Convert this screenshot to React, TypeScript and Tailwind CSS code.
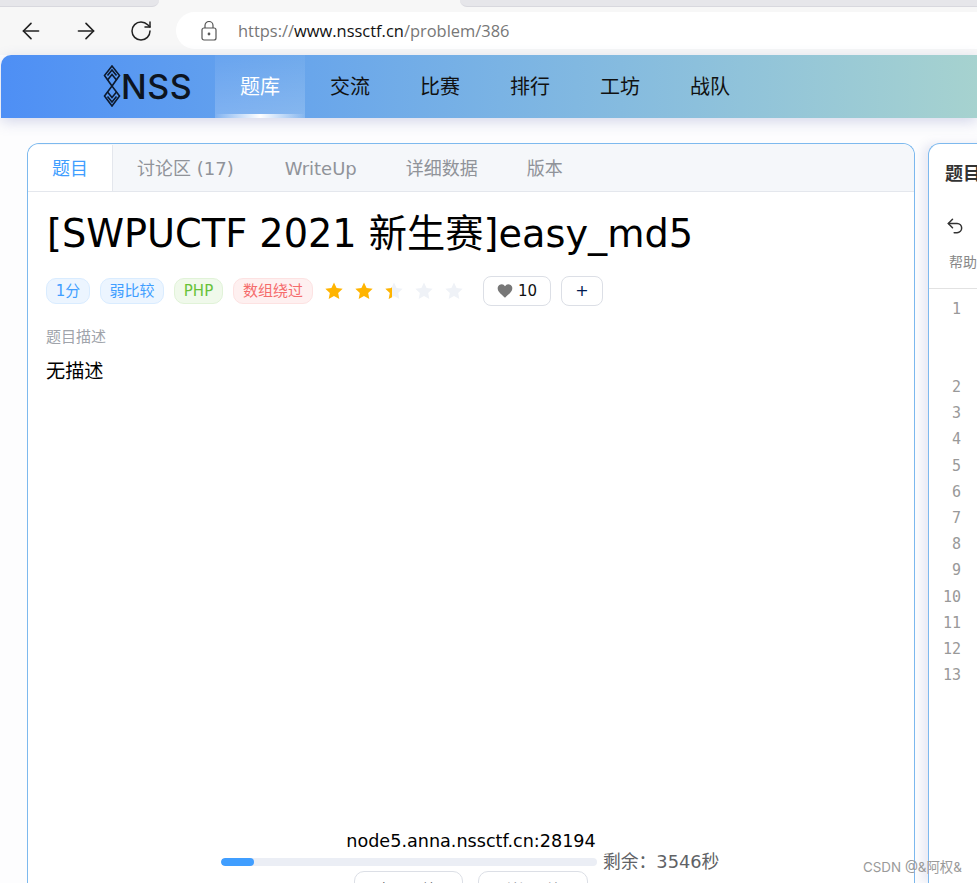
import { ArrowLeft, ArrowRight, RotateCw, Undo2 } from "lucide-react";

const navItems = ["题库", "交流", "比赛", "排行", "工坊", "战队"];
const lineNumbers = [2, 3, 4, 5, 6, 7, 8, 9, 10, 11, 12, 13];

const tags = [
  { label: "1分", cls: "w-[44px] border-[#d9ecff] bg-[#ecf5ff] text-[#409eff]" },
  { label: "弱比较", cls: "w-[64px] border-[#d9ecff] bg-[#ecf5ff] text-[#409eff]" },
  { label: "PHP", cls: "w-[49px] border-[#e1f3d8] bg-[#f0f9eb] text-[#67c23a]" },
  { label: "数组绕过", cls: "w-[80px] border-[#fde2e2] bg-[#fef0f0] text-[#f56c6c]" },
];

function Star({ color }: { color: string }) {
  return (
    <svg viewBox="0 0 24 24" className="h-[20px] w-[20px]" fill={color}>
      <path d="M12 1.800l3.100 6.700 7.300.9-5.400 5 1.400 7.300-6.400-3.600-6.400 3.600 1.400-7.300-5.400-5 7.300-.9z" />
    </svg>
  );
}

function LogoMark() {
  return (
    <svg viewBox="0 0 18 42" className="mb-px h-[42px] w-[18px]" fill="none" stroke="#0d1a2e" strokeWidth="1.600">
      <path d="M9 1L1.500 10.500 9 21l7.500-10.500z" />
      <path d="M4.500 10.500L9 5l4.500 5.500" />
      <path d="M4.500 15L9 9.500l4.500 5.500" />
      <path d="M9 21L1.500 31 9 41l7.500-10L9 21z" />
      <path d="M4.500 27L9 32.500 13.500 27" />
      <path d="M4.500 31.500L9 37l4.500-5.500" />
    </svg>
  );
}

export default function App() {
  return (
    <div className="relative flex h-[883px] w-[977px] flex-col overflow-hidden bg-[#fdfdfe] font-['DejaVu_Sans','Noto_Sans_CJK_SC',sans-serif]">
      {/* browser chrome */}
      <div className="flex h-[7px] justify-between bg-[#f7f7f7]">
        <div className="h-full w-[159px] rounded-br-lg border-b border-[#d8d8de] bg-[#e6e6ea]" />
        <div className="h-full w-[517px] rounded-bl-lg border-b border-[#d8d8de] bg-[#e6e6ea]" />
      </div>
      <div className="flex h-[48px] items-center bg-[#f7f7f7] pb-px pl-[18px]">
        <ArrowLeft className="h-[26px] w-[26px] text-[#222]" strokeWidth={1.5} />
        <ArrowRight className="ml-[29px] h-[26px] w-[26px] text-[#222]" strokeWidth={1.5} />
        <RotateCw className="ml-[30px] h-[24px] w-[24px] text-[#222]" strokeWidth={1.5} />
        <div className="ml-[23px] flex h-[37px] flex-1 items-center rounded-l-full bg-white pl-[25px]">
          <svg viewBox="0 0 16 20" className="h-[20px] w-[16px]" fill="none" stroke="#555" strokeWidth="1.200">
            <rect x="1" y="7" width="14" height="12" rx="2" />
            <path d="M4 7V4.500a4 4 0 018 0V7" />
            <circle cx="8" cy="13" r="0.8" fill="#555" />
          </svg>
          <span className="ml-[21px] pt-px font-['Open_Sans',sans-serif] text-[16.45px] text-[#777]">
            https://<span className="text-[#111]">www.nssctf.cn</span>/problem/386
          </span>
        </div>
      </div>

      {/* nav */}
      <div className="ml-px flex h-[63px] shrink-0 items-stretch rounded-tl-[10px] bg-gradient-to-r from-[#4e8ff5] to-[#a6d2cf] shadow-[0_4px_14px_rgba(120,130,190,0.3)]">
        <div className="flex w-[214px] items-center pl-[102px]">
          <LogoMark />
          <span className="font-['Inter',sans-serif] text-[34px] font-medium tracking-[0.5px] text-[#0d1420]">NSS</span>
        </div>
        {navItems.map((item, i) => (
          <div
            key={item}
            className={`relative flex w-[90px] items-center justify-center text-[20px] ${
              i === 0 ? "bg-gradient-to-b from-white/5 to-white/20 text-white" : "text-[#111]"
            }`}
          >
            {item}
            {i === 0 && (
              <div className="absolute inset-x-0 bottom-0 h-[4px] bg-gradient-to-r from-transparent via-white to-transparent" />
            )}
          </div>
        ))}
      </div>

      <div className="flex min-h-0 flex-1 gap-[13px] pl-[27px] pt-[25px]">
        {/* problem panel */}
        <div className="w-[888px] shrink-0 rounded-t-[12px] border border-b-0 border-[#7db9ee] bg-white">
          <div className="flex h-[48px] overflow-hidden rounded-t-[12px] border-b border-[#e4e7ed] bg-[#f5f7fa] pt-px text-[18px] text-[#909399]">
            <div className="-mb-px flex w-[85px] items-center justify-center border-r border-[#e4e7ed] bg-white text-[#409eff]">题目</div>
            <div className="ml-[24px] flex items-center">讨论区 (17)</div>
            <div className="ml-[51px] flex items-center">WriteUp</div>
            <div className="ml-[49px] flex items-center">详细数据</div>
            <div className="ml-[49px] flex items-center">版本</div>
          </div>

          <div className="pl-[18px]">
            <h1 className="ml-px mt-[15px] whitespace-nowrap text-[38.25px] leading-[54px] text-black">[SWPUCTF 2021 新生赛]easy_md5</h1>

            <div className="mt-[15px] flex h-[30px] items-center">
              <div className="flex gap-[10px]">
                {tags.map((t) => (
                  <div key={t.label} className={`flex h-[26px] items-center justify-center rounded-[10px] border text-[15px] ${t.cls}`}>
                    {t.label}
                  </div>
                ))}
              </div>
              <div className="ml-[11px] flex gap-[10px]">
                <Star color="#ffb400" />
                <Star color="#ffb400" />
                <div className="relative">
                  <Star color="#eff2f7" />
                  <div className="absolute left-0 top-0 h-[20px] w-[8px] overflow-hidden">
                    <Star color="#ffb400" />
                  </div>
                </div>
                <Star color="#eff2f7" />
                <Star color="#eff2f7" />
              </div>
              <div className="ml-[19px] flex h-[30px] w-[68px] items-center justify-center gap-[5px] rounded-[8px] border border-[#dcdfe6] text-[15px] text-[#111]">
                <svg viewBox="0 0 24 24" className="h-[16px] w-[16px]" fill="#777">
                  <path d="M12 22C5 16 1 12.500 1 8a6 6 0 0111-3.300A6 6 0 0123 8c0 4.500-4 8-11 14z" />
                </svg>
                10
              </div>
              <div className="ml-[10px] flex h-[30px] w-[42px] items-center justify-center rounded-[8px] border border-[#dcdfe6] text-[16px] text-[#001a50]">+</div>
            </div>

            <div className="mt-[21px] text-[15px] leading-[20px] text-[#a0a4ab]">题目描述</div>
            <div className="mt-[13px] text-[19.2px] leading-[24px] text-black">无描述</div>
          </div>
        </div>

        {/* editor panel */}
        <div className="w-[100px] shrink-0 rounded-tl-[12px] border border-b-0 border-r-0 border-[#7db9ee] bg-white shadow-[-6px_0_10px_rgba(120,130,190,0.15)]">
          <div className="ml-[16px] mt-[18px] whitespace-nowrap text-[18px] font-bold leading-[24px] text-[#333]">题目</div>
          <Undo2 className="ml-[16px] mt-[30px] h-[20px] w-[20px] text-[#333]" strokeWidth={1.8} />
          <div className="ml-[20px] mt-[16px] whitespace-nowrap text-[14px] leading-[20px] text-[#888]">帮助</div>
          <div className="mt-[16px] h-px bg-[#e2e2e2]" />
          <div className="w-[32px] pt-[7px] text-right font-['DejaVu_Sans_Mono',monospace] text-[15px] leading-[26.2px] text-[#999]">
            <div className="h-[78px]">1</div>
            {lineNumbers.map((n) => (
              <div key={n}>{n}</div>
            ))}
          </div>
        </div>
      </div>

      {/* instance status, floats over the panel */}
      <div className="absolute left-[221px] top-[830px] w-[500px]">
        <div className="text-center text-[17.6px] leading-[22px] text-black">node5.anna.nssctf.cn:28194</div>
        <div className="-mt-[2px] flex h-[24px] items-center">
          <div className="h-[8px] w-[376px] overflow-hidden rounded-full bg-[#ebeef5]">
            <div className="h-full w-[33px] rounded-full bg-[#409eff]" />
          </div>
          <div className="ml-[6px] text-[17.8px] text-[#606266]">剩余：3546秒</div>
        </div>
        <div className="ml-[133px] -mt-[3px] flex gap-[15px]">
          <div className="flex h-[32px] w-[109px] items-center justify-center rounded-[10px] border border-[#dcdfe6] bg-white pt-[4px] text-[14px] text-[#606266]">打开环境</div>
          <div className="flex h-[32px] w-[110px] items-center justify-center rounded-[10px] border border-[#dcdfe6] bg-white pt-[4px] text-[14px] text-[#909399]">关闭环境</div>
        </div>
      </div>

      <div className="absolute left-[863px] top-[858px] font-['Inter','Noto_Sans_CJK_SC',sans-serif] text-[13.4px] leading-[18px] text-[#9a9a9a]">CSDN @&amp;阿权&amp;</div>
    </div>
  );
}
